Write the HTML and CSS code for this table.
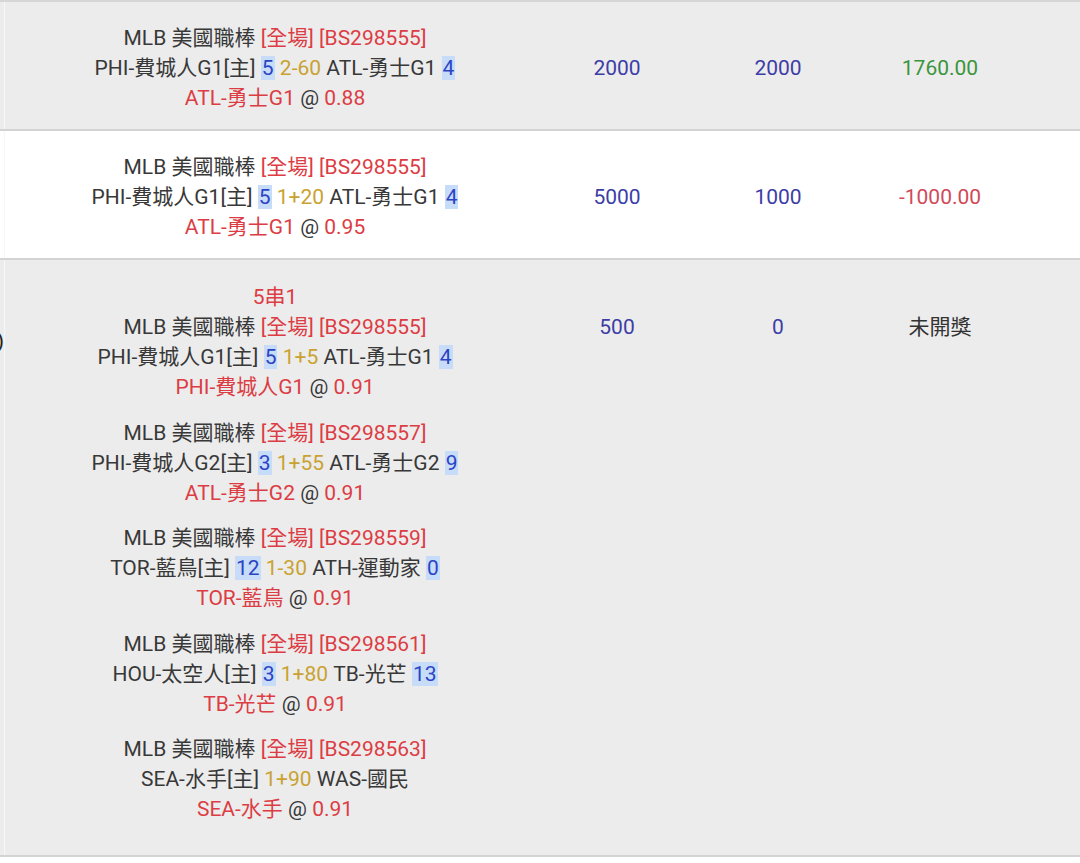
FILE: index.html
```html
<!DOCTYPE html>
<html lang="zh-Hant">
<head>
<meta charset="utf-8">
<link rel="stylesheet" href="styles.css">
</head>
<body>
<div class="table">
  <div class="row gray">
    <div class="edge"></div>
    <div class="bet">
      <div class="leg">
        <div>MLB 美國職棒 <span class="red">[全場] [BS298555]</span></div>
        <div>PHI-費城人G1[主] <span class="sc">5</span> <span class="hc">2-60</span> ATL-勇士G1 <span class="sc">4</span></div>
        <div><span class="red">ATL-勇士G1</span> @ <span class="red">0.88</span></div>
      </div>
    </div>
    <div class="amt">2000</div>
    <div class="amt">2000</div>
    <div class="amt win">1760.00</div>
    <div class="tail"></div>
  </div>

  <div class="row white">
    <div class="edge"></div>
    <div class="bet">
      <div class="leg">
        <div>MLB 美國職棒 <span class="red">[全場] [BS298555]</span></div>
        <div>PHI-費城人G1[主] <span class="sc">5</span> <span class="hc">1+20</span> ATL-勇士G1 <span class="sc">4</span></div>
        <div><span class="red">ATL-勇士G1</span> @ <span class="red">0.95</span></div>
      </div>
    </div>
    <div class="amt">5000</div>
    <div class="amt">1000</div>
    <div class="amt lose">-1000.00</div>
    <div class="tail"></div>
  </div>

  <div class="row gray tall">
    <div class="edge"><span class="clip">0)</span></div>
    <div class="bet">
      <div class="combo red">5串1</div>
      <div class="leg">
        <div>MLB 美國職棒 <span class="red">[全場] [BS298555]</span></div>
        <div>PHI-費城人G1[主] <span class="sc">5</span> <span class="hc">1+5</span> ATL-勇士G1 <span class="sc">4</span></div>
        <div><span class="red">PHI-費城人G1</span> @ <span class="red">0.91</span></div>
      </div>
      <div class="leg">
        <div>MLB 美國職棒 <span class="red">[全場] [BS298557]</span></div>
        <div>PHI-費城人G2[主] <span class="sc">3</span> <span class="hc">1+55</span> ATL-勇士G2 <span class="sc">9</span></div>
        <div><span class="red">ATL-勇士G2</span> @ <span class="red">0.91</span></div>
      </div>
      <div class="leg">
        <div>MLB 美國職棒 <span class="red">[全場] [BS298559]</span></div>
        <div>TOR-藍鳥[主] <span class="sc">12</span> <span class="hc">1-30</span> ATH-運動家 <span class="sc">0</span></div>
        <div><span class="red">TOR-藍鳥</span> @ <span class="red">0.91</span></div>
      </div>
      <div class="leg">
        <div>MLB 美國職棒 <span class="red">[全場] [BS298561]</span></div>
        <div>HOU-太空人[主] <span class="sc">3</span> <span class="hc">1+80</span> TB-光芒 <span class="sc">13</span></div>
        <div><span class="red">TB-光芒</span> @ <span class="red">0.91</span></div>
      </div>
      <div class="leg">
        <div>MLB 美國職棒 <span class="red">[全場] [BS298563]</span></div>
        <div>SEA-水手[主] <span class="hc">1+90</span> WAS-國民</div>
        <div><span class="red">SEA-水手</span> @ <span class="red">0.91</span></div>
      </div>
    </div>
    <div class="amt">500</div>
    <div class="amt">0</div>
    <div class="amt pending">未開獎</div>
    <div class="tail"></div>
  </div>
</div>
</body>
</html>
```
FILE: styles.css
```css
html, body {
  margin: 0;
  padding: 0;
  background: #ffffff;
}
body {
  width: 1080px;
  height: 863px;
  overflow: hidden;
  font-family: Roboto, "Noto Sans CJK TC", "Noto Sans", sans-serif;
  font-size: 21px;
  line-height: 30px;
  color: #383838;
}
.table {
  border-top: 2px solid #d6d6d6;
}
.row {
  display: grid;
  grid-template-columns: 5px 540px 144px 178px 146px 1fr;
  border-bottom: 2px solid #d3d3d3;
}
.gray { background: #ececec; }
.white { background: #ffffff; }
.edge {
  display: flex;
  justify-content: flex-end;
  overflow: hidden;
  border-right: 1px solid #f7f7f7;
  padding-top: 66px;
  color: #222;
}
.clip { white-space: nowrap; }
.bet {
  padding: 21px 0 1px;
  text-align: center;
}
.tall .bet { padding: 22px 0 15px; }
.leg { margin-bottom: 15px; }
.tall .leg { margin-bottom: 15.5px; }
.leg div { white-space: nowrap; }
.red { color: #dc3d44; }
.sc {
  color: #2c44c4;
  background: #c6dcf8;
  padding: 0 1px;
}
.hc { color: #c9a231; }
.amt {
  padding-top: 51px;
  text-align: center;
  color: #3d3da6;
}
.tall .amt { padding-top: 52px; }
.win { color: #3b953b; }
.lose { color: #cf4a5a; }
.pending { color: #333333; }
```
